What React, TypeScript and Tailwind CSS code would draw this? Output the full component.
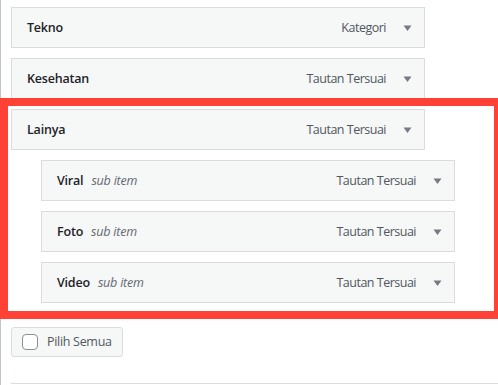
import React from "react";

type Item = { title: string; type: string; sub?: boolean };

const items: Item[] = [
  { title: "Tekno", type: "Kategori" },
  { title: "Kesehatan", type: "Tautan Tersuai" },
  { title: "Lainya", type: "Tautan Tersuai" },
  { title: "Viral", type: "Tautan Tersuai", sub: true },
  { title: "Foto", type: "Tautan Tersuai", sub: true },
  { title: "Video", type: "Tautan Tersuai", sub: true },
];

function Arrow() {
  return (
    <svg width="9" height="8" viewBox="0 0 9 8" className="block">
      <path d="M0.5 1.5 L8.5 1.5 L4.5 7 Z" fill="#787c82" />
    </svg>
  );
}

function Row({ item }: { item: Item }) {
  return (
    <div
      className={`flex h-[41px] w-[414px] items-center border border-[#dcdcde] bg-[#f6f7f7] pl-[15px] pr-[12px] ${
        item.sub ? "ml-[30px]" : ""
      }`}
    >
      <span className="pt-px text-[12.5px] font-semibold tracking-[-0.2px] text-[#1d2327]">
        {item.title}
      </span>
      {item.sub && (
        <span className="ml-[8px] pt-px text-[12.5px] italic tracking-[-0.2px] text-[#646970]">
          sub item
        </span>
      )}
      <span className="ml-auto pt-px text-[12.5px] tracking-[-0.5px] text-[#50575e]">
        {item.type}
      </span>
      <span className="ml-[17px]">
        <Arrow />
      </span>
    </div>
  );
}

export default function App() {
  return (
    <div
      className="relative h-[385px] w-[498px] overflow-hidden bg-white"
      style={{ fontFamily: '"Open Sans", "Noto Sans", sans-serif' }}
    >
      <div className="flex h-full flex-col border-l border-[#c3c4c7] pl-[10px] pt-[7px]">
        <div className="flex flex-col gap-[10px]">
          {items.map((it) => (
            <Row key={it.title} item={it} />
          ))}
        </div>
        <div className="mt-[24px]">
          <button className="flex h-[30px] w-[112px] items-center rounded-[3px] border border-[#dcdcde] bg-[#f6f7f7] pl-[10px]">
            <span className="h-[16px] w-[16px] rounded-[4px] border border-[#8c8f94] bg-white" />
            <span className="ml-[9px] text-[12.5px] tracking-[-0.3px] text-[#50575e]">
              Pilih Semua
            </span>
          </button>
        </div>
        <div className="mt-[26px] h-px w-full bg-[#dcdcde]" />
      </div>
      <div className="absolute left-0 top-[98px] h-[221px] w-[502px] border-[8px] border-[#ff4136]" />
    </div>
  );
}
